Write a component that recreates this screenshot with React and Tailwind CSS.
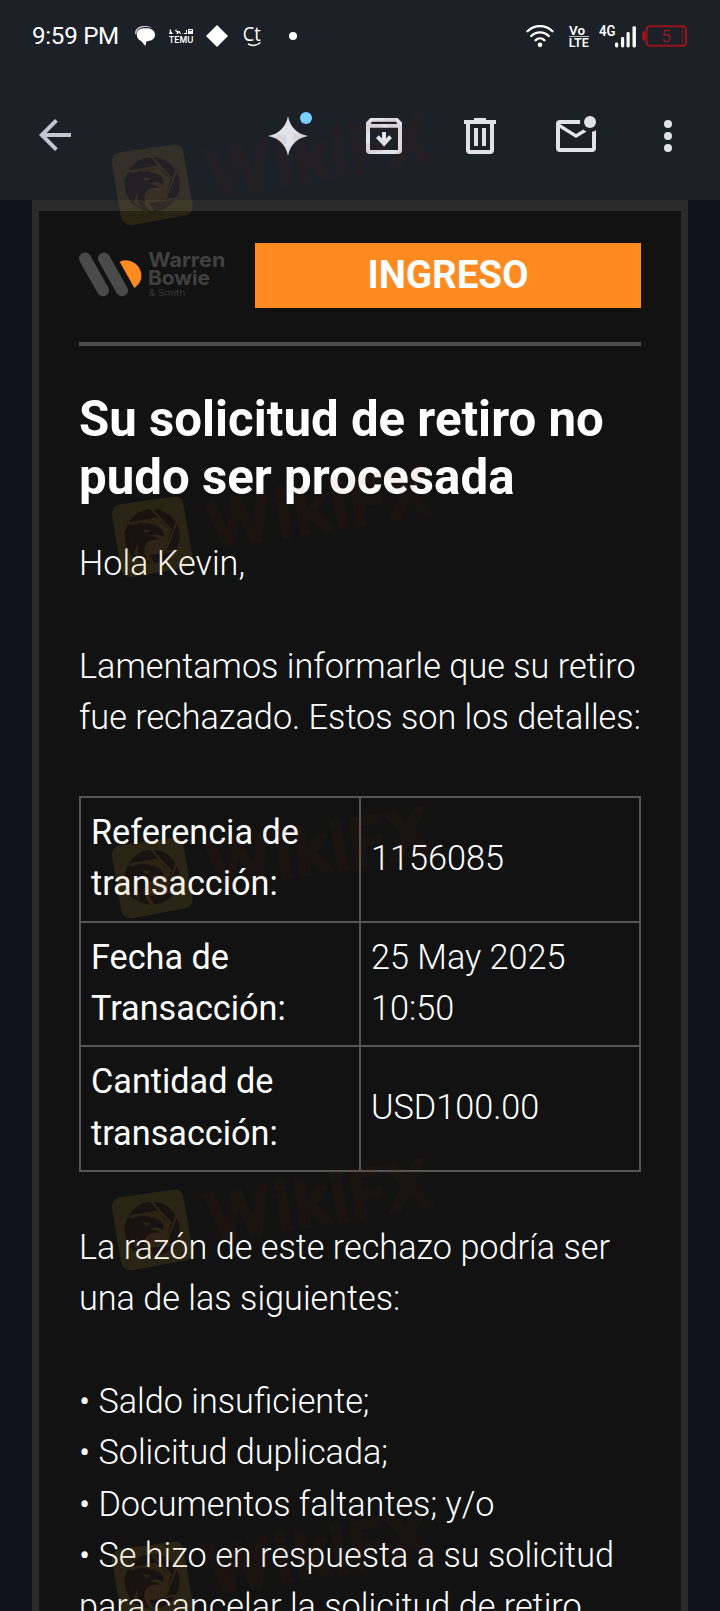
import React from "react";

const details = [
  { label: "Referencia de transacción:", value: "1156085" },
  { label: "Fecha de Transacción:", value: "25 May 2025 10:50" },
  { label: "Cantidad de transacción:", value: "USD100.00" },
];

const reasons = [
  "Saldo insuficiente;",
  "Solicitud duplicada;",
  "Documentos faltantes; y/o",
  "Se hizo en respuesta a su solicitud para cancelar la solicitud de retiro",
];

const watermarkTops = [107, 459, 800, 1152, 1504];

function StatusBar() {
  return (
    <div className="flex h-[72px] items-center pl-8 pr-[33px] text-white">
      <span className="w-[103px] whitespace-nowrap text-[24.200px] leading-[30px] tracking-[-0.300px]">
        9:59 PM
      </span>

      {/* Chat bubble */}
      <svg className="h-5 w-5" viewBox="0 0 20 20" fill="currentColor">
        <path d="M0 7.500C0 2.500 4 0 9 0c4 0 6.500.5 8 2-2-1-4-1-7-1C5 1.200 1.500 3.500 1.200 9Z" opacity=".75" />
        <path d="M1.800 8.500C1.800 4 5 2.200 10.500 2.200S20 4 20 8.800c0 4.200-3.500 6.400-8.500 6.400L10.300 20 6.200 15C3.300 13.800 1.800 11.800 1.800 8.500Z" />
      </svg>

      {/* Temu */}
      <svg className="ml-[13px] h-[15px] w-[26px] overflow-visible" viewBox="0 0 26 15" fill="currentColor">
        <path d="M1 0l1 1 1-1v2l2 3H1l1-3ZM8 0l1 2h3v1l1 2h-1l-1-1.500L9.500 5H8.500l.5-2-2-1ZM14 4.500h1V5h-1ZM16 4h2V1h1v4h-3ZM20 0h5v5h-5Zm1.200 1v1h2.600V1Z" />
        <text x="0.800" y="13.800" fontSize="9.500" fontWeight="600" fontFamily="Inter, sans-serif" textLength="24.500" lengthAdjust="spacingAndGlyphs">
          TEMU
        </text>
      </svg>

      <svg className="ml-3 h-[22px] w-[22px]" viewBox="0 0 22 22" fill="currentColor">
        <path d="M11 0 22 11 11 22 0 11Z" />
      </svg>

      <svg className="ml-[14px] h-6 w-[22px] overflow-visible" viewBox="0 0 22 24">
        <text x="0.800" y="16.800" fontSize="20" fontFamily="'Open Sans', sans-serif" fontWeight="500" fill="currentColor" textLength="18" lengthAdjust="spacingAndGlyphs">
          Ct
        </text>
        <path d="M6 20c4 2 9 1.500 12.500-1.500" fill="none" stroke="currentColor" strokeWidth="1.500" />
      </svg>

      <span className="ml-[25px] h-2 w-2 rounded-full bg-white" />

      {/* Wifi */}
      <svg className="ml-auto h-6 w-7" viewBox="0 0 28 24" fill="none" stroke="currentColor" strokeWidth="2.300" strokeLinecap="round">
        <path d="M1.500 7.300C8.500.5 19.500.5 26.500 7.300M5.200 12c5-4.900 12.600-4.900 17.600 0M9.500 16.300c2.600-2.500 6.400-2.500 9 0" />
        <circle cx="14" cy="20.800" r="1.200" fill="currentColor" />
      </svg>

      <svg className="ml-[14px] h-[23px] w-[22px] overflow-visible" viewBox="0 0 22 23" fill="currentColor" fontFamily="Roboto, sans-serif" fontWeight="600">
        <text x="1" y="9.800" fontSize="13" textLength="16" lengthAdjust="spacingAndGlyphs">
          Vo
        </text>
        <text x="0.800" y="22" fontSize="13.500" textLength="20" lengthAdjust="spacingAndGlyphs">
          LTE
        </text>
        <path d="M1 11h20v1H1Z" opacity=".7" />
      </svg>

      {/* Mobile signal */}
      <svg className="ml-2 h-[23px] w-[39px] overflow-visible" viewBox="0 0 39 23" fill="currentColor">
        <text x="1" y="11" fontSize="14" fontFamily="Roboto, sans-serif" fontWeight="600" textLength="16.500" lengthAdjust="spacingAndGlyphs">
          4G
        </text>
        <rect x="17" y="17.500" width="3.200" height="5" rx="1.400" />
        <rect x="23" y="12" width="3.200" height="10.500" rx="1.400" />
        <rect x="28.500" y="7" width="3.200" height="15.500" rx="1.400" />
        <rect x="34.500" y="1.200" width="3.400" height="21.300" rx="1.400" />
      </svg>

      <svg className="ml-[5px] h-[22px] w-[45px]" viewBox="0 0 45 22">
        <path d="M3 6v10C1 16 .3 14.500.3 13V9C.3 7.500 1 6 3 6Z" fill="#b30e10" />
        <rect x="4.500" y="1.200" width="39.500" height="19.600" rx="3.200" fill="none" stroke="#9a1518" strokeWidth="2" />
        <path d="M40.500 3.500v15" stroke="#6d171b" strokeWidth="1.500" />
        <text x="24" y="17.200" textAnchor="middle" fontSize="17" fontFamily="Roboto, sans-serif" fontWeight="300" fill="#b5181b">
          5
        </text>
      </svg>
    </div>
  );
}

function Icon({ children, className = "" }) {
  return (
    <svg className={`h-12 w-12 shrink-0 overflow-visible ${className}`} viewBox="0 0 24 24" fill="currentColor">
      {children}
    </svg>
  );
}

function Toolbar() {
  return (
    <div className="flex h-32 items-center pl-[31px] text-[#e1e3e9]">
      <Icon className="-mt-[2px] text-[#c3c6d0]">
        <path d="M20 11H7.830l5.590-5.590L12 4l-8 8 8 8 1.410-1.410L7.830 13H20Z" />
      </Icon>

      <Icon className="ml-[185px]">
        <path d="M12 2c.8 5.200 4.700 9.200 10 10-5.300.8-9.200 4.800-10 10-.8-5.200-4.700-9.200-10-10 5.300-.8 9.200-4.800 10-10Z" />
        <circle cx="21" cy="3" r="3" fill="#7cd0ff" />
      </Icon>

      {/* Archive */}
      <Icon className="ml-12">
        <path
          fillRule="evenodd"
          d="M5.200 3h13.600L21 5.300V19a2 2 0 0 1-2 2H5a2 2 0 0 1-2-2V5.300ZM6 4.900l-.6 1.100h13.200L18 4.900ZM5 7.900V19h14V7.900Z"
        />
        <path d="M11 10h2v3.200l1.600-1.600L16 13l-4 4.200L8 13l1.400-1.400 1.600 1.600Z" />
      </Icon>

      {/* Delete */}
      <Icon className="ml-12">
        <path
          fillRule="evenodd"
          d="M9 3h6v1h5v2h-1v13a2 2 0 0 1-2 2H7a2 2 0 0 1-2-2V6H4V4h5ZM7 6v13h10V6ZM9 8h2v9H9Zm4 0h2v9h-2Z"
        />
      </Icon>

      {/* Mark as unread */}
      <Icon className="ml-12">
        <path d="M22 8.980V18a2 2 0 0 1-2 2H4a2 2 0 0 1-2-2V6a2 2 0 0 1 2-2h10.100a5 5 0 0 0 0 2H4l8 5 3.670-2.290c.47.43 1.020.76 1.630.98L12 13 4 8v10h16V9.900c.74-.15 1.420-.48 2-.92Z" />
        <circle cx="19" cy="5" r="3" />
      </Icon>

      <Icon className="ml-11">
        <circle cx="12" cy="6" r="2" />
        <circle cx="12" cy="12" r="2" />
        <circle cx="12" cy="18" r="2" />
      </Icon>
    </div>
  );
}

function BrandLogo() {
  return (
    <svg className="h-[45px] w-[147px] shrink-0 overflow-visible" viewBox="177 187 441 135" fontFamily="Inter, sans-serif" fill="#404040">
      <path d="M195 206.500 249 302M252 206.500 306 302" stroke="#4a4a4a" strokeWidth="36" strokeLinecap="round" />
      <path d="M299 216C322 205 353 217 362 245c6 20-1 38-19 50Z" fill="#ff8a20" />
      <text x="385" y="233" fontSize="61" fontWeight="700" textLength="231" lengthAdjust="spacingAndGlyphs">
        Warren
      </text>
      <text x="384" y="287" fontSize="61" fontWeight="700" textLength="186" lengthAdjust="spacingAndGlyphs">
        Bowie
      </text>
      <text x="386" y="318" fontSize="27" textLength="110" lengthAdjust="spacingAndGlyphs">
        &amp; Smith
      </text>
    </svg>
  );
}

function Watermark({ top }) {
  return (
    <svg className="absolute left-[110px] h-[120px] w-[333px] overflow-visible" style={{ top }} viewBox="330 50 1000 360">
      <mask id="emblem" maskUnits="userSpaceOnUse" x="330" y="150" width="260" height="260">
        <path
          fill="#fff"
          d="M365 185 520 163Q545 159 550 184L578 344Q580 370 555 376L400 404Q370 408 363 380L336 218Q334 190 365 185Z"
        />
        <circle cx="457" cy="282" r="82" fill="#000" />
        {/* Shutter blades */}
        <path d="M384 244 468 229 490 238M454 200 515 264M532 236 497 325M534 324 448 335M438 335 462 365" fill="none" stroke="#fff" strokeWidth="6" />
        <path d="M395 245 474 232 512 266 496 324 447 335 462 363 430 358 395 330Z" fill="#fff" />
        {/* Eagle head */}
        <path
          fill="#000"
          d="M374 268 397 248 420 242 447 243 474 252Q492 263 492 284Q480 276 466 276L448 282 466 285 482 292Q450 288 438 305Q427 324 440 350L452 364 425 358Q408 336 414 306Q400 324 404 350L390 334Q386 312 398 290Q382 300 380 316L374 286 389 274 374 280Z"
        />
        <path d="M430 262 452 263Q445 274 434 269Z" fill="#fff" />
      </mask>
      <circle cx="457" cy="282" r="82" fill="#80280e" opacity=".06" />
      <rect x="330" y="150" width="260" height="260" fill="#c99a28" opacity=".13" mask="url(#emblem)" />
      <g opacity=".065">
        <text
          x="4 211 268 381 436 546"
          y="0"
          transform="translate(630 320) rotate(-9.300)"
          fontFamily="Inter, sans-serif"
          fontSize="192"
          fontWeight="500"
          fill="#80280e"
          stroke="#80280e"
          strokeWidth="13"
          strokeLinejoin="round"
        >
          WikiFX
        </text>
      </g>
    </svg>
  );
}

export default function App() {
  return (
    <div className="relative h-[1611px] w-[720px] overflow-hidden bg-[#0f141c] font-[Roboto,sans-serif]">
      <header className="h-[200px] bg-[#1c2027]">
        <StatusBar />
        <Toolbar />
      </header>

      <main className="mx-8 h-[1500px] border-x-[7px] border-t-[11px] border-[#2b2b2b] bg-[#121212] px-10 text-[34.220px] font-light leading-[51.330px] text-white">
        <div className="flex items-start justify-between pt-8">
          <div className="pt-[9px]">
            <BrandLogo />
          </div>
          <div className="flex h-[65px] w-[386px] items-center justify-center bg-[#ff8a20] pb-[2px] text-[38.500px] font-bold">
            INGRESO
          </div>
        </div>
        <hr className="mt-[34px] border-t-4 border-[#4a4a4a]" />

        <h1 className="mt-[44px] whitespace-nowrap text-[49.200px] font-bold leading-[58px]">
          Su solicitud de retiro no
          <br />
          pudo ser procesada
        </h1>

        <p className="mt-8">Hola Kevin,</p>
        <p className="mt-[51.330px] whitespace-nowrap">
          Lamentamos informarle que su retiro
          <br />
          fue rechazado. Estos son los detalles:
        </p>

        <table className="mt-[52.600px] w-[562px] table-fixed border-collapse">
          <tbody>
            {details.map((d) => (
              <tr key={d.label}>
                <td className="border-2 border-[#555] px-[10px] pt-[9px] pb-[11px] font-normal">{d.label}</td>
                <td className="border-2 border-[#555] px-[10px] pt-[9px] pb-[11px]">{d.value}</td>
              </tr>
            ))}
          </tbody>
        </table>

        <p className="mt-[50px]">
          La razón de este rechazo podría ser una de las siguientes:
        </p>
        <ul className="mt-[51.400px] -mr-4">
          {reasons.map((r) => (
            <li key={r}>• {r}</li>
          ))}
        </ul>
      </main>

      {/* Watermarks over the whole screen */}
      <div className="pointer-events-none absolute inset-0">
        {watermarkTops.map((top) => (
          <Watermark key={top} top={top} />
        ))}
      </div>
    </div>
  );
}
